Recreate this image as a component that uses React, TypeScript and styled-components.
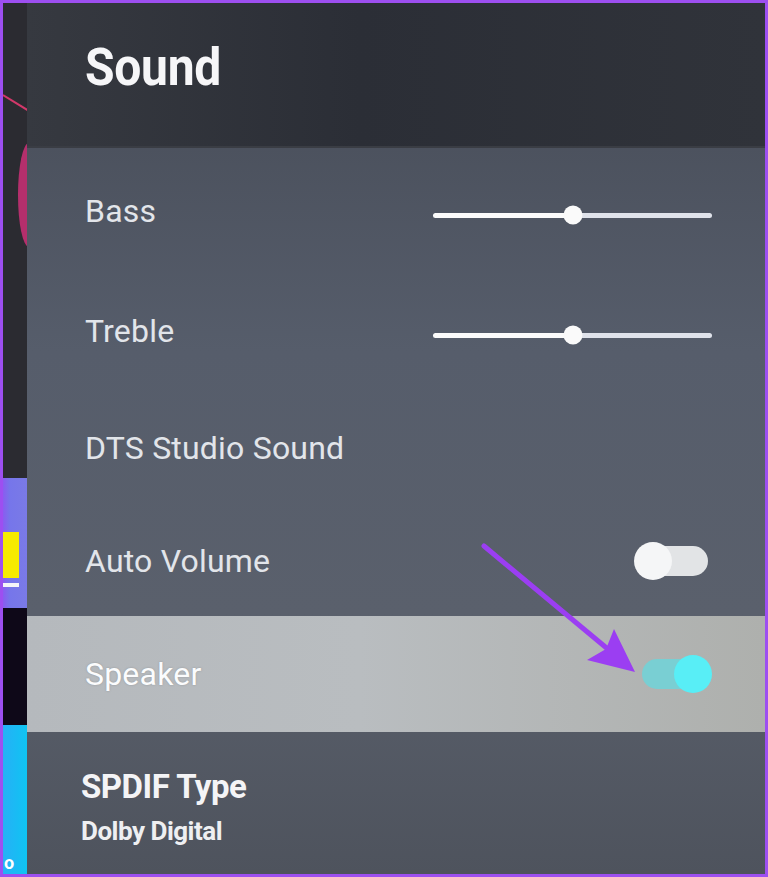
import styled, { createGlobalStyle } from "styled-components";

const GlobalStyle = createGlobalStyle`
  html, body {
    margin: 0;
    padding: 0;
    background: #9d4ff0;
  }
  * {
    box-sizing: border-box;
  }
`;

const Frame = styled.div`
  position: relative;
  width: 768px;
  height: 877px;
  border: 3px solid #9d4ff0;
  display: flex;
  overflow: hidden;
  font-family: Roboto, "Liberation Sans", sans-serif;
`;

const SideStrip = styled.div`
  width: 24px;
  display: flex;
  flex-direction: column;
  flex-shrink: 0;
`;

const StripPart = styled.div<{ $h: number; $bg: string }>`
  height: ${(p) => p.$h}px;
  background: ${(p) => p.$bg};
  position: relative;
  display: flex;
  flex-direction: column;
  align-items: flex-start;
`;

const DarkArt = styled.svg`
  display: block;
`;

const YellowBar = styled.div`
  margin-top: 54px;
  width: 16px;
  height: 46px;
  background: #f6ea00;
`;

const WhiteDash = styled.div`
  margin-top: 5px;
  width: 16px;
  height: 4px;
  background: #f4f4f8;
`;

const StripLetter = styled.span`
  margin-top: auto;
  margin-bottom: 2px;
  font-weight: 700;
  font-size: 18px;
  line-height: 18px;
  color: #ffffff;
  padding-left: 1px;
`;

const Panel = styled.div`
  flex: 1;
  display: flex;
  flex-direction: column;
  background: linear-gradient(180deg, #454a55 0%, #565d6b 40%, #5a606c 70%, #4e535d 100%);
`;

const Header = styled.div`
  height: 145px;
  padding: 33px 0 0 58px;
  background: linear-gradient(90deg, #363940 0%, #2b2e36 45%, #30333a 100%);
  border-bottom: 2px solid #3a3d44;
`;

const Title = styled.h1`
  margin: 0;
  font-size: 48px;
  font-weight: 700;
  color: #f6f6f8;
  letter-spacing: -0.3px;
  transform: scaleY(1.08);
  transform-origin: left top;
`;

const List = styled.div`
  padding-top: 2px;
  display: flex;
  flex-direction: column;
`;

const Row = styled.div<{ $h: number; $active?: boolean }>`
  height: ${(p) => p.$h}px;
  display: flex;
  align-items: center;
  justify-content: space-between;
  padding: 0 55px 0 58px;
  background: ${(p) =>
    p.$active ? "linear-gradient(90deg, #b5b9bd 0%, #b9bdc0 45%, #aeb0ad 100%)" : "transparent"};
`;

const Label = styled.span<{ $active?: boolean }>`
  font-size: 32px;
  color: ${(p) => (p.$active ? "#fbfcfd" : "#e2e5ea")};
  letter-spacing: 0.2px;
  text-shadow: ${(p) => (p.$active ? "0 0 2px rgba(120,125,130,0.6)" : "none")};
`;

const SliderTrack = styled.div`
  position: relative;
  width: 279px;
  height: 5px;
  margin: 8px -2px 0 0;
  border-radius: 3px;
  background: linear-gradient(90deg, #fbfbfb 0%, #fbfbfb 50%, #dfe2ea 50%, #dfe2ea 100%);
`;

const SliderThumb = styled.div`
  position: absolute;
  top: 50%;
  width: 19px;
  height: 19px;
  border-radius: 50%;
  background: #fafafa;
  transform: translate(-50%, -50%);
`;

const Toggle = styled.div<{ $on?: boolean }>`
  position: relative;
  width: 74px;
  height: 38px;
  display: flex;
  align-items: center;
  justify-content: ${(p) => (p.$on ? "flex-end" : "flex-start")};
  margin-right: ${(p) => (p.$on ? "-2px" : "2px")};
`;

const ToggleTrack = styled.div<{ $on?: boolean }>`
  position: absolute;
  left: ${(p) => (p.$on ? "4px" : "10px")};
  right: ${(p) => (p.$on ? "10px" : "0")};
  height: 30px;
  border-radius: 15px;
  background: ${(p) => (p.$on ? "#79cfd3" : "#e2e4e6")};
`;

const ToggleKnob = styled.div<{ $on?: boolean }>`
  position: relative;
  width: 38px;
  height: 38px;
  border-radius: 50%;
  background: ${(p) => (p.$on ? "#58eef6" : "#f5f6f7")};
`;

const Footer = styled.div`
  padding: 35px 0 0 54px;
  display: flex;
  flex-direction: column;
`;

const FooterTitle = styled.span`
  font-size: 33px;
  font-weight: 700;
  color: #f4f4f6;
  letter-spacing: -0.5px;
`;

const FooterValue = styled.span`
  margin-top: 10px;
  font-size: 26px;
  font-weight: 700;
  color: #eeeff2;
  letter-spacing: -0.5px;
`;

const Annotation = styled.svg`
  position: absolute;
  left: 0;
  top: 0;
  pointer-events: none;
`;

function Slider({ value }: { value: number }) {
  return (
    <SliderTrack>
      <SliderThumb style={{ left: `${value}%` }} />
    </SliderTrack>
  );
}

function Switch({ on }: { on?: boolean }) {
  return (
    <Toggle $on={on}>
      <ToggleTrack $on={on} />
      <ToggleKnob $on={on} />
    </Toggle>
  );
}

export default function App() {
  return (
    <>
      <GlobalStyle />
      <Frame>
        <SideStrip>
          <StripPart $h={475} $bg="#2b2b31">
            <DarkArt width="24" height="475" viewBox="0 0 24 475">
              <line x1="0" y1="92" x2="26" y2="108" stroke="#d2386a" strokeWidth="2" />
              <ellipse cx="26" cy="192" rx="11" ry="52" fill="#b42f6c" />
            </DarkArt>
          </StripPart>
          <StripPart $h={130} $bg="linear-gradient(90deg, #8a5cf0 0%, #7676ea 30%, #7a7ae6 100%)">
            <YellowBar />
            <WhiteDash />
          </StripPart>
          <StripPart $h={117} $bg="#0e0818" />
          <StripPart $h={149} $bg="linear-gradient(90deg, #26b0f6 0%, #0fc4f2 100%)">
            <StripLetter>o</StripLetter>
          </StripPart>
        </SideStrip>
        <Panel>
          <Header>
            <Title>Sound</Title>
          </Header>
          <List>
            <Row $h={122}>
              <Label>Bass</Label>
              <Slider value={50} />
            </Row>
            <Row $h={118}>
              <Label>Treble</Label>
              <Slider value={50} />
            </Row>
            <Row $h={116}>
              <Label>DTS Studio Sound</Label>
            </Row>
            <Row $h={110}>
              <Label>Auto Volume</Label>
              <Switch />
            </Row>
            <Row $h={116} $active>
              <Label $active>Speaker</Label>
              <Switch on />
            </Row>
          </List>
          <Footer>
            <FooterTitle>SPDIF Type</FooterTitle>
            <FooterValue>Dolby Digital</FooterValue>
          </Footer>
        </Panel>
        <Annotation width="768" height="877" viewBox="0 0 768 877">
          <line x1="481" y1="543" x2="612" y2="652" stroke="#9b3ef2" strokeWidth="5" strokeLinecap="round" />
          <polygon points="632,669 584,657 603,646 611,626" fill="#9b3ef2" />
        </Annotation>
      </Frame>
    </>
  );
}
